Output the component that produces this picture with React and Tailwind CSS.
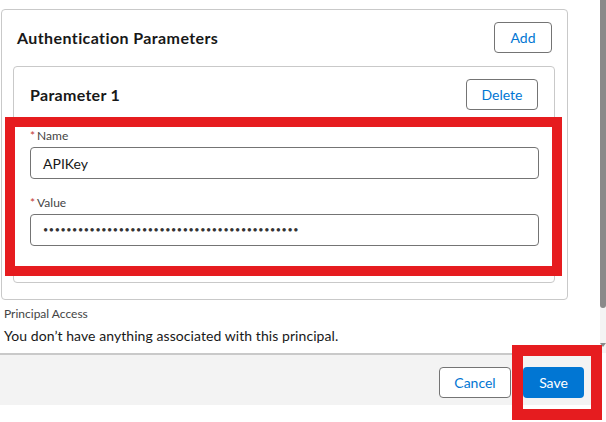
import React from 'react';

const font = { fontFamily: 'Lato, "Noto Sans", sans-serif' };

const Field = ({ label, children }) => (
  <div>
    <div className="h-[18px] text-[12px] leading-[18px] text-[#444444]">
      <span className="text-[#c23934] mr-[2px]">*</span>{label}
    </div>
    <div className="mt-[2px] h-[32px] w-[509px] rounded-[4px] border border-[#747474] bg-white px-[12px] flex items-center text-[14px] text-[#181818]">
      {children}
    </div>
  </div>
);

export default function App() {
  return (
    <div className="relative w-[606px] h-[422px] overflow-hidden bg-white" style={font}>
      <div className="flex h-[353px]">
        <div className="w-[600px] pt-[9px] pl-[1px]">
          {/* Authentication Parameters card */}
          <div className="w-[567px] h-[291px] rounded-[4px] border border-[#c9c9c9]">
            <div className="flex items-center justify-between pl-[15px] pr-[15px] pt-[12px]">
              <h2 className="text-[16px] font-bold tracking-[0.4px] text-[#181818]">Authentication Parameters</h2>
              <button className="h-[31px] w-[58px] rounded-[4px] border border-[#747474] text-[14px] text-[#0176d3]">Add</button>
            </div>
            <div className="ml-[11px] mt-[13px] w-[542px] h-[217px] rounded-[4px] border border-[#c9c9c9] px-[16px] pt-[12px]">
              <div className="flex items-center justify-between">
                <h3 className="text-[16px] font-bold tracking-[0.3px] text-[#181818]">Parameter 1</h3>
                <button className="h-[31px] w-[72px] rounded-[4px] border border-[#747474] text-[14px] text-[#0176d3]">Delete</button>
              </div>
              <div className="mt-[17px] flex flex-col gap-[15px]">
                <Field label="Name">APIKey</Field>
                <Field label="Value">
                  <span className="text-[9px] tracking-[0.6px] text-[#333333]">{'•'.repeat(44)}</span>
                </Field>
              </div>
            </div>
          </div>
          <div className="pl-[3px] pt-[5px]">
            <div className="text-[12px] leading-[18px] text-[#444444]">Principal Access</div>
            <div className="mt-[3px] text-[14px] leading-[20px] tracking-[0.07px] text-[#181818]">You don’t have anything associated with this principal.</div>
          </div>
        </div>
        {/* scrollbar */}
        <div className="w-[6px] flex flex-col bg-[#f4f4f4]">
          <div className="h-[308px] rounded-b-[3px] bg-[#8a8a8a]"></div>
          <div className="flex-1 flex items-end justify-center pb-[6px]">
            <div className="w-0 h-0 border-l-[3px] border-r-[3px] border-t-[4px] border-l-transparent border-r-transparent border-t-[#8a8a8a]"></div>
          </div>
        </div>
      </div>
      {/* footer */}
      <div className="h-[52px] w-[600px] border-t-2 border-[#c9c9c9] bg-[#f3f3f3] flex items-start justify-end gap-[12px] pr-[16px] pt-[12px]">
        <button className="h-[31px] w-[72px] rounded-[4px] border border-[#747474] bg-white text-[14px] text-[#0176d3]">Cancel</button>
        <button className="h-[31px] w-[61px] rounded-[4px] bg-[#0176d3] text-[14px] text-white">Save</button>
      </div>

      {/* annotation boxes */}
      <div className="absolute left-[5px] top-[117px] w-[557px] h-[159px] border-[10px] border-[#e61c1f]"></div>
      <div className="absolute left-[512px] top-[345px] w-[90px] h-[75px] border-[11px] border-[#e61c1f]"></div>
    </div>
  );
}
